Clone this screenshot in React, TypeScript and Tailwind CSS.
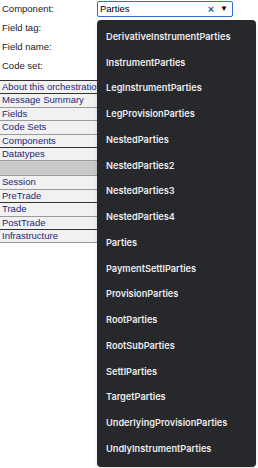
import React from "react";

const labels = ["Component:", "Field tag:", "Field name:", "Code set:"];

type Row = { text: string; gray?: boolean; dark?: boolean };
const rows: Row[] = [
  { text: "About this orchestration", dark: true },
  { text: "Message Summary" },
  { text: "Fields" },
  { text: "Code Sets" },
  { text: "Components", dark: true },
  { text: "Datatypes" },
  { text: "", gray: true },
  { text: "Session" },
  { text: "PreTrade", dark: true },
  { text: "Trade" },
  { text: "PostTrade", dark: true },
  { text: "Infrastructure" },
];

const items = [
  "DerivativeInstrumentParties",
  "InstrumentParties",
  "LegInstrumentParties",
  "LegProvisionParties",
  "NestedParties",
  "NestedParties2",
  "NestedParties3",
  "NestedParties4",
  "Parties",
  "PaymentSettlParties",
  "ProvisionParties",
  "RootParties",
  "RootSubParties",
  "SettlParties",
  "TargetParties",
  "UnderlyingProvisionParties",
  "UndlyInstrumentParties",
];

export default function App() {
  return (
    <div
      className="relative w-[258px] h-[468px] bg-white overflow-hidden text-[9.5px] text-[#1a1a1a]"
      style={{ fontFamily: '"Liberation Sans", Arial, sans-serif' }}
    >
      <div className="flex flex-col pl-[2px]">
        {labels.map((l) => (
          <div key={l} className="h-[19px] flex items-center">
            {l}
          </div>
        ))}
      </div>
      <div className="mt-[4px] w-[112px] border-t border-[#333]">
        {rows.map((r, i) => (
          <div
            key={i}
            className={`flex items-center pl-[2px] border-b whitespace-nowrap overflow-hidden text-[#25257a] ${
              r.gray ? "bg-[#c9c9c9] h-[15px]" : "bg-[#f1f1f1] h-[13.4px]"
            } ${r.dark ? "border-[#333]" : "border-[#9a9a9a]"}`}
          >
            {r.text}
          </div>
        ))}
      </div>

      <div className="absolute left-[97px] top-[1px] w-[136px] h-[16px] bg-white border border-[#2f6fd6] rounded-[2px] flex items-center pl-[2px] pr-[4px]">
        <span className="flex-1 text-black">Parties</span>
        <span className="text-[#2f5fa8] text-[11px] leading-none mr-[6px] font-bold">×</span>
        <span className="text-black text-[8px] leading-none">▼</span>
      </div>

      <div
        className="absolute left-[97px] top-[20px] w-[159px] h-[447px] bg-[#27282c] rounded-[4px] py-[4px] shadow-md"
        style={{ fontFamily: "Inter, sans-serif" }}
      >
        {items.map((it) => (
          <div
            key={it}
            className="h-[25.75px] flex items-center pl-[9px] text-[#ececec] font-semibold text-[9.2px] whitespace-nowrap"
          >
            {it}
          </div>
        ))}
      </div>
    </div>
  );
}
